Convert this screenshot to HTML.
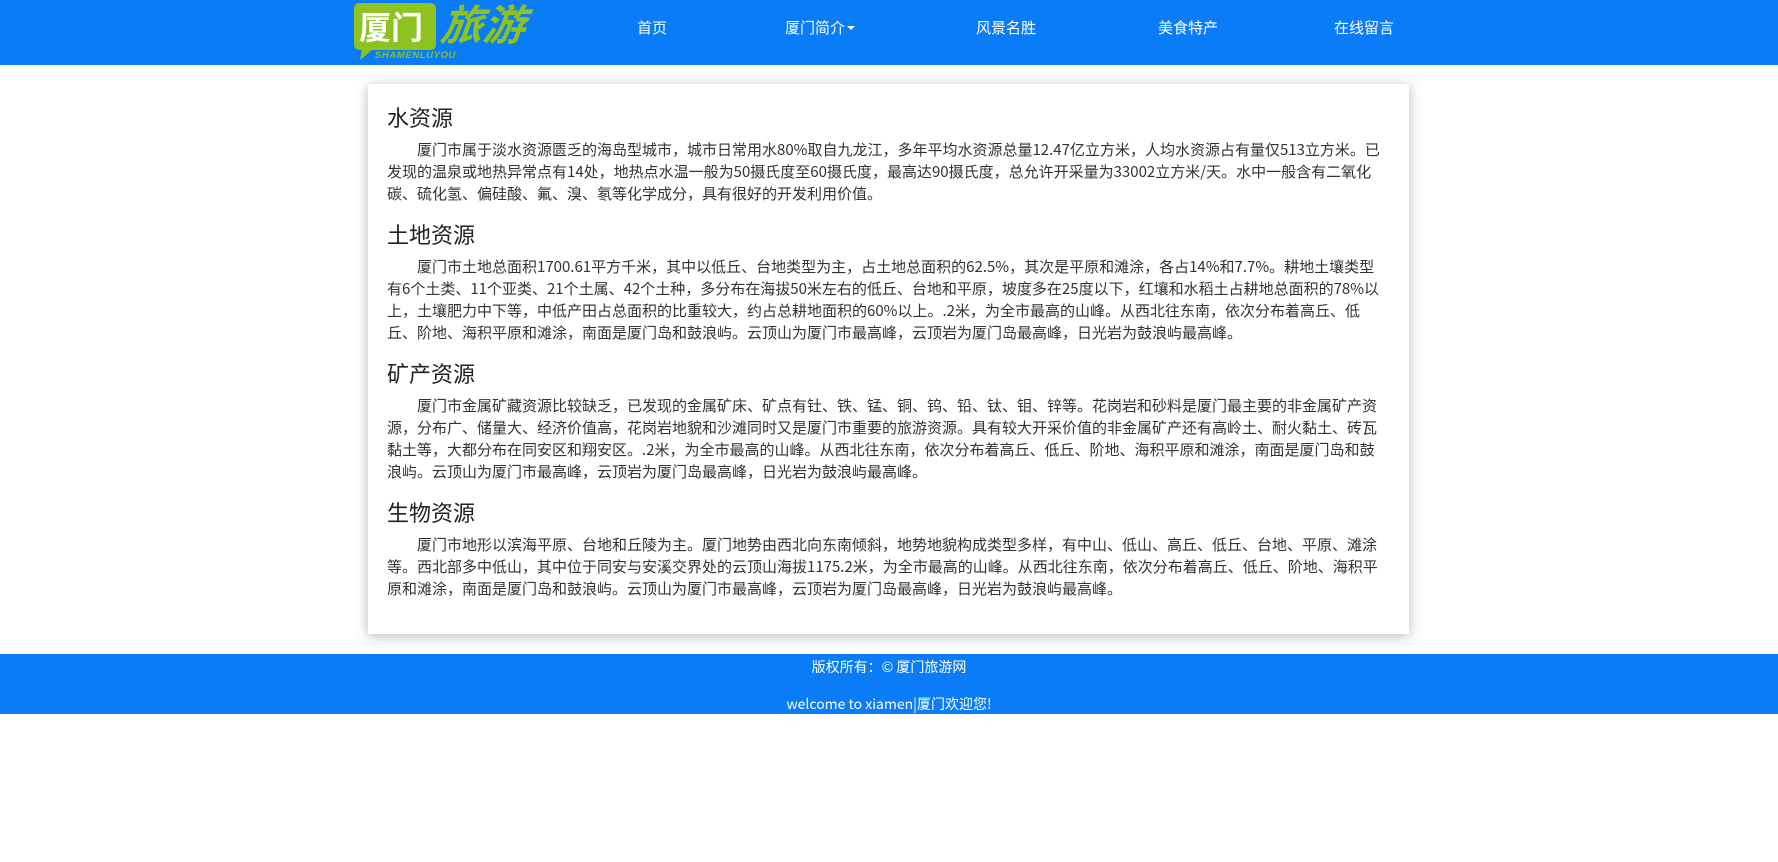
<!DOCTYPE html>
<html><head><meta charset="utf-8"><style>
*{margin:0;padding:0;box-sizing:border-box}
body{width:1778px;height:862px;background:#fff;font-family:"Noto Sans CJK SC","Liberation Sans",sans-serif;color:#333;position:relative;overflow:hidden}
.hdr{position:absolute;left:0;top:0;width:1778px;height:65px;background:#0a7cf7}
.logo{position:absolute;left:350px;top:0;width:190px;height:65px}
.nav a{position:absolute;top:17px;color:#fff;font-size:15px;text-decoration:none;transform:translateX(-50%);white-space:nowrap}
.caret{display:inline-block;width:0;height:0;border-left:4px solid transparent;border-right:4px solid transparent;border-top:4px solid #fff;vertical-align:3px;margin-left:2px}
.card{position:absolute;left:368px;top:84px;width:1041px;height:550px;background:#fff;box-shadow:0 2px 12px rgba(0,0,0,.28);padding:18px 20px 0 19px}
h3{font-size:22px;font-weight:normal;line-height:30px;margin-bottom:7px;color:#222}
p{font-size:15px;line-height:22px;text-indent:2em;margin-bottom:14px;color:#333}
.ft{position:absolute;left:0;top:654px;width:1778px;height:60px;background:#0a7cf7;color:#fff;font-size:14px;text-align:center}
</style></head><body>
<div class="hdr">
<svg class="logo" viewBox="0 0 190 65">
<path d="M4 9 Q4 3 10 3 H80 Q86 3 86 9 V44 Q86 50 80 50 H22 L10 60 L12 50 H10 Q4 50 4 44Z" fill="#8dc21f"/>
<text x="9" y="39" font-size="32" font-weight="bold" fill="#fff" font-family="Noto Sans CJK SC,sans-serif">厦门</text>
<text x="94" y="40" font-size="42" fill="#8dc21f" font-style="italic" font-family="Noto Sans CJK SC,sans-serif" transform="skewX(-6)" style="font-weight:bold">旅游</text>
<text x="25" y="58" font-size="9.5" font-weight="bold" font-style="italic" fill="#8dc21f" font-family="Liberation Sans,sans-serif" letter-spacing="0.6">SHAMENLUYOU</text>
</svg>
<div class="nav">
<a style="left:652px">首页</a>
<a style="left:820px">厦门简介<span class="caret"></span></a>
<a style="left:1006px">风景名胜</a>
<a style="left:1188px">美食特产</a>
<a style="left:1364px">在线留言</a>
</div></div>
<div class="card">
<h3>水资源</h3>
<p>厦门市属于淡水资源匮乏的海岛型城市，城市日常用水80%取自九龙江，多年平均水资源总量12.47亿立方米，人均水资源占有量仅513立方米。已发现的温泉或地热异常点有14处，地热点水温一般为50摄氏度至60摄氏度，最高达90摄氏度，总允许开采量为33002立方米/天。水中一般含有二氧化碳、硫化氢、偏硅酸、氟、溴、氡等化学成分，具有很好的开发利用价值。</p>
<h3>土地资源</h3>
<p>厦门市土地总面积1700.61平方千米，其中以低丘、台地类型为主，占土地总面积的62.5%，其次是平原和滩涂，各占14%和7.7%。耕地土壤类型有6个土类、11个亚类、21个土属、42个土种，多分布在海拔50米左右的低丘、台地和平原，坡度多在25度以下，红壤和水稻土占耕地总面积的78%以上，土壤肥力中下等，中低产田占总面积的比重较大，约占总耕地面积的60%以上。.2米，为全市最高的山峰。从西北往东南，依次分布着高丘、低丘、阶地、海积平原和滩涂，南面是厦门岛和鼓浪屿。云顶山为厦门市最高峰，云顶岩为厦门岛最高峰，日光岩为鼓浪屿最高峰。</p>
<h3>矿产资源</h3>
<p>厦门市金属矿藏资源比较缺乏，已发现的金属矿床、矿点有钍、铁、锰、铜、钨、铅、钛、钼、锌等。花岗岩和砂料是厦门最主要的非金属矿产资源，分布广、储量大、经济价值高，花岗岩地貌和沙滩同时又是厦门市重要的旅游资源。具有较大开采价值的非金属矿产还有高岭土、耐火黏土、砖瓦黏土等，大都分布在同安区和翔安区。.2米，为全市最高的山峰。从西北往东南，依次分布着高丘、低丘、阶地、海积平原和滩涂，南面是厦门岛和鼓浪屿。云顶山为厦门市最高峰，云顶岩为厦门岛最高峰，日光岩为鼓浪屿最高峰。</p>
<h3>生物资源</h3>
<p>厦门市地形以滨海平原、台地和丘陵为主。厦门地势由西北向东南倾斜，地势地貌构成类型多样，有中山、低山、高丘、低丘、台地、平原、滩涂等。西北部多中低山，其中位于同安与安溪交界处的云顶山海拔1175.2米，为全市最高的山峰。从西北往东南，依次分布着高丘、低丘、阶地、海积平原和滩涂，南面是厦门岛和鼓浪屿。云顶山为厦门市最高峰，云顶岩为厦门岛最高峰，日光岩为鼓浪屿最高峰。</p>
</div>
<div class="ft">
<div style="position:absolute;top:3px;width:100%">版权所有：© 厦门旅游网</div>
<div style="position:absolute;top:40px;width:100%">welcome to xiamen|厦门欢迎您!</div>
</div>
</body></html>
